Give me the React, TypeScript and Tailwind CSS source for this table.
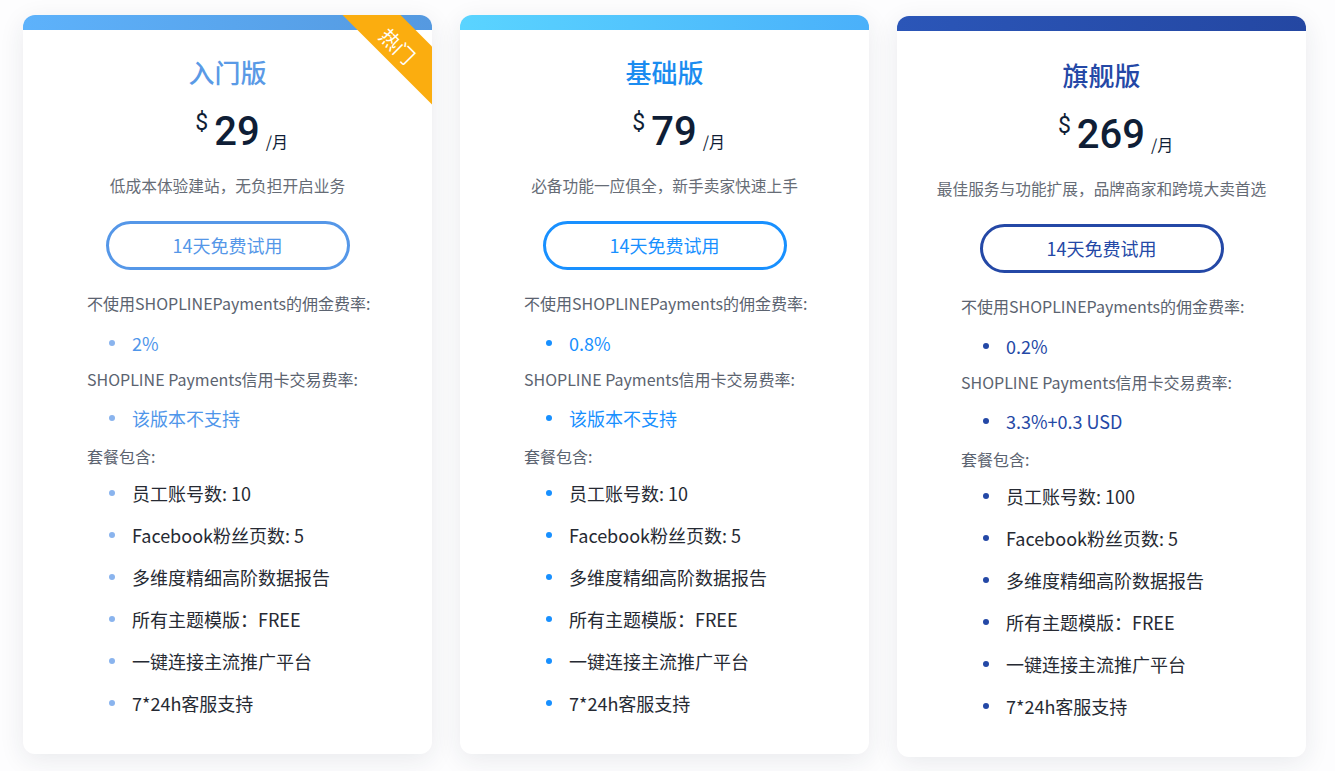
import React from 'react';

interface Plan {
  name: string;
  price: string;
  desc: string;
  bar: string;
  title: string;
  btn: string;
  value: string;
  dot: string;
  commission: string;
  card: string;
  items: string[];
  hot?: boolean;
  shift?: boolean;
}

const plans: Plan[] = [
  {
    name: '入门版',
    price: '29',
    desc: '低成本体验建站，无负担开启业务',
    bar: 'bg-gradient-to-r from-[#5db2fb] to-[#5599e0]',
    title: 'text-[#5a9ae6]',
    btn: 'border-[#5597e8] text-[#5597e8]',
    value: 'text-[#4f96ea]',
    dot: 'bg-[#8ab4ee]',
    commission: '2%',
    card: '该版本不支持',
    items: ['员工账号数: 10', 'Facebook粉丝页数: 5', '多维度精细高阶数据报告', '所有主题模版：FREE', '一键连接主流推广平台', '7*24h客服支持'],
    hot: true,
  },
  {
    name: '基础版',
    price: '79',
    desc: '必备功能一应俱全，新手卖家快速上手',
    bar: 'bg-gradient-to-r from-[#5ad4ff] to-[#4ab0fa]',
    title: 'text-[#1b8cf0]',
    btn: 'border-[#1890ff] text-[#1890ff]',
    value: 'text-[#1890ff]',
    dot: 'bg-[#1890ff]',
    commission: '0.8%',
    card: '该版本不支持',
    items: ['员工账号数: 10', 'Facebook粉丝页数: 5', '多维度精细高阶数据报告', '所有主题模版：FREE', '一键连接主流推广平台', '7*24h客服支持'],
  },
  {
    name: '旗舰版',
    price: '269',
    desc: '最佳服务与功能扩展，品牌商家和跨境大卖首选',
    bar: 'bg-gradient-to-r from-[#2b56b8] to-[#2447a2]',
    title: 'text-[#2448a6]',
    btn: 'border-[#2448a6] text-[#2448a6]',
    value: 'text-[#2448a6]',
    dot: 'bg-[#2448a6]',
    commission: '0.2%',
    card: '3.3%+0.3 USD',
    items: ['员工账号数: 100', 'Facebook粉丝页数: 5', '多维度精细高阶数据报告', '所有主题模版：FREE', '一键连接主流推广平台', '7*24h客服支持'],
    shift: true,
  },
];

function Bullet({ dot, className, children }: { dot: string; className: string; children: React.ReactNode }) {
  return (
    <div className={`flex items-center h-6 pl-[22px] text-[18px] whitespace-nowrap ${className}`}>
      <span className={`w-[6px] h-[6px] rounded-full mr-[17px] ${dot}`} />
      {children}
    </div>
  );
}

function PlanCard({ plan }: { plan: Plan }) {
  return (
    <div className={`relative w-[409px] bg-white rounded-xl overflow-hidden shadow-[0_6px_26px_rgba(30,45,70,0.09)] ${plan.shift ? 'mt-px' : ''}`}>
      <div className={`h-[15px] ${plan.bar}`} />
      {plan.hot && (
        <div className="absolute left-[297px] top-[8px] w-[160px] h-[41px] rotate-45 bg-[#fbad0f] flex items-center justify-center pt-[6px] text-white text-[20px] leading-none">
          热门
        </div>
      )}
      <div className={`flex flex-col items-center ${plan.shift ? 'pt-[26px]' : 'pt-6'}`}>
        <h3 className={`text-[26px] leading-9 font-medium ${plan.title}`}>{plan.name}</h3>
        <div className="mt-[18px] h-12 flex items-center font-['Roboto'] text-[#0f1e36]">
          <span className="relative flex items-center">
            <span className="text-[23px] self-start leading-none mt-[3px] mr-[6px]">$</span>
            <span className="text-[40px] leading-[48px] font-medium">{plan.price}</span>
            <span className="absolute left-full ml-[6px] bottom-[7px] text-[16px] leading-none font-['Noto_Sans_CJK_SC'] whitespace-nowrap">/月</span>
          </span>
        </div>
        <p className="mt-5 text-[15.7px] leading-5 text-[#666c76] whitespace-nowrap">{plan.desc}</p>
        <button className={`mt-[25px] w-[244px] h-[49px] rounded-full border-[3px] text-[18px] ${plan.btn}`}>
          14天免费试用
        </button>
      </div>
      <div className="px-16 pt-[21px] pb-[39px]">
        <div className="h-6 leading-6 text-[16px] text-[#5b6370] whitespace-nowrap">不使用SHOPLINEPayments的佣金费率:</div>
        <Bullet dot={plan.dot} className={`mt-[16px] ${plan.value}`}>{plan.commission}</Bullet>
        <div className="mt-3 h-6 leading-6 text-[16px] text-[#5b6370] whitespace-nowrap">SHOPLINE Payments信用卡交易费率:</div>
        <Bullet dot={plan.dot} className={`mt-[15px] ${plan.value}`}>{plan.card}</Bullet>
        <div className="mt-[14px] h-6 leading-6 text-[16px] text-[#5b6370]">套餐包含:</div>
        <div className="mt-[13px] flex flex-col gap-[18px]">
          {plan.items.map((item) => (
            <Bullet key={item} dot={plan.dot} className="text-[#262a33]">{item}</Bullet>
          ))}
        </div>
      </div>
    </div>
  );
}

export default function App() {
  return (
    <div className="min-h-[771px] bg-[#fdfdfe] px-[23px] pt-[15px] font-['Noto_Sans_CJK_SC',sans-serif]">
      <div className="flex items-start gap-[28px]">
        {plans.map((plan) => (
          <PlanCard key={plan.name} plan={plan} />
        ))}
      </div>
    </div>
  );
}
